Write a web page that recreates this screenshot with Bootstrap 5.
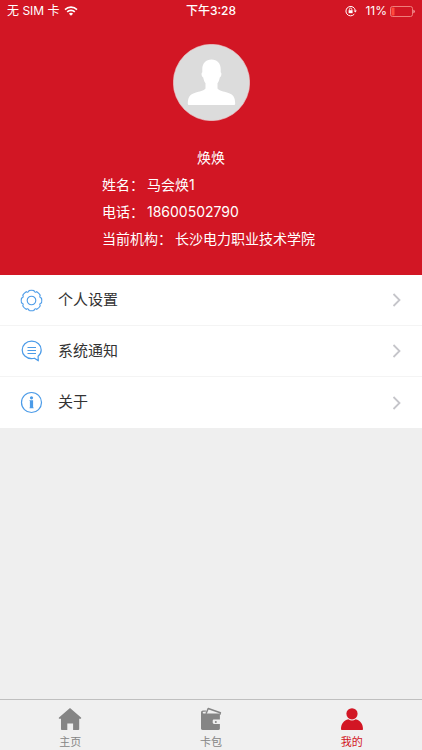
<!DOCTYPE html>
<html lang="zh-CN">
<head>
<meta charset="utf-8">
<meta name="viewport" content="width=device-width, initial-scale=1">
<title>我的</title>
<link href="https://cdn.jsdelivr.net/npm/bootstrap@5.3.0/dist/css/bootstrap.min.css" rel="stylesheet">
<style>
body { font-family: Inter, "Noto Sans CJK SC", sans-serif; background: #efefef; color: #333; }
svg { display: block; flex: none; }
.status-bar { font-size: 12px; line-height: 20px; padding: 1px 7px; }
.status-bar .side { flex: 1 1 0; }
.battery { margin-left: 3px; }
.profile { background: #d21624; padding-bottom: 23px; }
.avatar { margin-top: 22px; }
.nickname { font-size: 14px; line-height: 24px; margin-top: 25px; }
.details { font-size: 14px; line-height: 27px; width: 218px; margin-top: 1px; }
.details dt, .details dd { font-weight: 400; margin: 0; }
.details div { gap: 3px; }
.menu .list-group-item { height: 51px; padding: 0 20px; gap: 15px; font-size: 15px; color: #333; border-color: #f4f4f4; }
.menu .list-group-item:last-child { border-bottom: 0; }
.tabs { background: #f0f0f0; border-top: 1px solid #bfbfbf; height: 51px; }
.tabs .nav-link { padding: 7px 0 0; font-size: 11px; line-height: 16px; color: #858585; gap: 3px; }
.tabs .nav-link.active { color: #d21624; }
</style>
<script src="https://cdn.jsdelivr.net/npm/bootstrap@5.3.0/dist/js/bootstrap.bundle.min.js"></script>
</head>
<body>
<div class="d-flex flex-column min-vh-100">
  <header class="profile text-white d-flex flex-column align-items-center">
    <div class="status-bar d-flex align-items-center w-100">
      <div class="side d-flex align-items-center gap-1">
        <span>无 SIM 卡</span>
        <svg width="14" height="10" viewBox="0 0 14 10" fill="none" stroke="#fff" stroke-width="1.6"><path d="M1 3.6a8.6 8.6 0 0 1 12 0M3.2 5.9a5.4 5.4 0 0 1 7.6 0"/><path d="M7 9.8 4.9 7.7a3 3 0 0 1 4.2 0z" fill="#fff" stroke="none"/></svg>
      </div>
      <span class="fw-medium">下午3:28</span>
      <div class="side d-flex align-items-center justify-content-end">
        <svg class="me-2" width="12" height="12" viewBox="0 0 12 12" fill="none" stroke="#fff"><path d="M9.3 9.1A4.7 4.7 0 1 1 10.3 5.5"/><path d="m8.6 5.4 1.7 2 1.5-2z" fill="#fff" stroke="none"/><path d="M3.6 5.2h4v3h-4z" fill="#fff" stroke="none"/><path d="M4.4 5.4V4.3a1.2 1.2 0 0 1 2.4 0v1.1" stroke-width=".8"/></svg>
        <span>11%</span>
        <svg class="battery" width="25" height="11" viewBox="0 0 25 11"><rect x=".5" y=".5" width="22" height="10" rx="2" fill="none" stroke="#f08a86" stroke-width=".9"/><rect x="1.5" y="1.500" width="3" height="8" rx=".8" fill="#ff4a3d"/><path d="M23.500 3.700c1.600.6 1.600 3 0 3.600z" fill="#fbc4c4"/></svg>
      </div>
    </div>
    <svg class="avatar" width="77" height="77" viewBox="0 0 77 77" role="img" aria-label="头像"><circle cx="38.5" cy="38.5" r="38.2" fill="#dcdcdc" stroke="#ecd0d2" stroke-width=".6"/><path fill="#fff" d="M38.5 15.500c5.700 0 9.200 4 9.200 9.500v3.200c1.400.8.700 4.400-.9 5.200-.5 2.700-1.300 4.400-2.300 5.800v5.300c1.700 2.300 6 2.900 10.300 4.300 5.500 1.900 7.400 4.500 7.400 11.200 0 .5-.4.9-.9.9H15.700c-.5 0-.9-.4-.9-.9 0-6.700 1.900-9.300 7.400-11.200 4.300-1.400 8.600-2 10.300-4.300v-5.300c-1-1.400-1.800-3.100-2.300-5.800-1.600-.8-2.300-4.400-.9-5.200V25c0-5.500 3.500-9.500 9.200-9.500z"/></svg>
    <div class="nickname">焕焕</div>
    <dl class="details mb-0">
      <div class="d-flex"><dt>姓名：</dt><dd>马会焕1</dd></div>
      <div class="d-flex"><dt>电话：</dt><dd>18600502790</dd></div>
      <div class="d-flex"><dt>当前机构：</dt><dd class="text-nowrap">长沙电力职业技术学院</dd></div>
    </dl>
  </header>

  <main class="menu list-group list-group-flush flex-grow-1">
    <a href="#settings" class="list-group-item list-group-item-action d-flex align-items-center">
      <svg width="23" height="23" viewBox="-11.5 -11.5 23 23" fill="none" stroke="#4b9be8" stroke-width="1.1"><path stroke-linejoin="round" d="M-2.500-10A10.300 10.300 0 0 1 2.500-10A1.600 1.600 0 0 0 5.300-8.840A10.300 10.300 0 0 1 8.840-5.300A1.600 1.600 0 0 0 10-2.500A10.300 10.300 0 0 1 10 2.500A1.600 1.600 0 0 0 8.840 5.300A10.300 10.300 0 0 1 5.300 8.840A1.600 1.600 0 0 0 2.500 10A10.300 10.300 0 0 1-2.500 10A1.600 1.600 0 0 0-5.300 8.840A10.300 10.300 0 0 1-8.840 5.300A1.600 1.600 0 0 0-10 2.500A10.300 10.300 0 0 1-10-2.500A1.600 1.600 0 0 0-8.840-5.300A10.300 10.300 0 0 1-5.300-8.840A1.600 1.600 0 0 0-2.500-10z"/><circle r="4.300"/></svg>
      <span class="flex-grow-1">个人设置</span>
      <svg width="10" height="14" viewBox="0 0 10 14" fill="none" stroke="#c5c5ca" stroke-width="1.8"><path d="m1.500 1 6 6-6 6"/></svg>
    </a>
    <a href="#notices" class="list-group-item list-group-item-action d-flex align-items-center">
      <svg width="23" height="23" viewBox="0 0 23 23" fill="none" stroke="#4b9be8" stroke-width="1.2"><path stroke-linejoin="round" d="M14.500 18.200c-1 .3-2 .4-3 .4-5.300 0-9.300-3.900-9.300-8.700s4-8.700 9.500-8.700 9.500 3.900 9.500 8.700c0 2.500-1.200 4.700-3.100 6.300l.2 4.600z"/><path d="M7.500 7.500h8.500M7.500 10.500h8.500M7.500 13.500h8.500"/></svg>
      <span class="flex-grow-1">系统通知</span>
      <svg width="10" height="14" viewBox="0 0 10 14" fill="none" stroke="#c5c5ca" stroke-width="1.8"><path d="m1.500 1 6 6-6 6"/></svg>
    </a>
    <a href="#about" class="list-group-item list-group-item-action d-flex align-items-center">
      <svg width="23" height="23" viewBox="0 0 23 23"><circle cx="11.500" cy="11.500" r="10" fill="none" stroke="#4b9be8" stroke-width="1.2"/><circle cx="11.500" cy="6.800" r="1.600" fill="#4b9be8"/><path fill="#4b9be8" d="M9.500 9.300h3.600v7.200h.6v.8H9.500v-.8h.4v-6.400h-.4z"/></svg>
      <span class="flex-grow-1">关于</span>
      <svg width="10" height="14" viewBox="0 0 10 14" fill="none" stroke="#c5c5ca" stroke-width="1.8"><path d="m1.500 1 6 6-6 6"/></svg>
    </a>
  </main>

  <nav class="tabs nav nav-fill sticky-bottom">
    <a href="#home" class="nav-item nav-link d-flex flex-column align-items-center">
      <svg width="24" height="24" viewBox="0 0 24 24" fill="#858585"><path d="M12 1 23 10.500c.5.500.2 1.300-.5 1.300h-1.300v10.400c0 .6-.3.800-.8.800h-5.300v-6.500H9.300V23H3.800c-.5 0-.8-.2-.8-.8V11.800H1.500c-.7 0-1-.8-.5-1.300z"/></svg>
      <span>主页</span>
    </a>
    <a href="#cards" class="nav-item nav-link d-flex flex-column align-items-center">
      <svg width="24" height="24" viewBox="0 0 24 24"><path fill="#858585" d="M2 5.500C2 4.300 2.900 3.500 4 3.500h3.200l-.5 1.300H4.700c-1.300 0-1.300 1.800 0 1.800h14.800c.9 0 1.400.5 1.400 1.400v4.500h-5.700c-1 0-1.500.5-1.500 1.400v1.600c0 .9.500 1.400 1.500 1.400h5.700v4.600c0 .9-.5 1.400-1.400 1.400H3.500c-.9 0-1.500-.5-1.500-1.400z"/><path fill="none" stroke="#858585" stroke-width="1.5" stroke-linejoin="round" d="m7 6.800 2.200-5.300 12.200 4.300-.7 2"/><circle cx="16.800" cy="14.900" r="1" fill="#858585"/></svg>
      <span>卡包</span>
    </a>
    <a href="#me" class="nav-item nav-link active d-flex flex-column align-items-center" aria-current="page">
      <svg width="24" height="24" viewBox="0 0 24 24" fill="#d21624"><circle cx="12" cy="6.800" r="5.600"/><path d="M1 22.200c0-5.300 2.700-8.700 7.400-9.900 2.200 1.600 5 1.600 7.200 0 4.700 1.200 7.400 4.600 7.400 9.900 0 .5-.3.800-.8.800H1.800c-.5 0-.8-.3-.8-.8z"/></svg>
      <span>我的</span>
    </a>
  </nav>
</div>
</body>
</html>
